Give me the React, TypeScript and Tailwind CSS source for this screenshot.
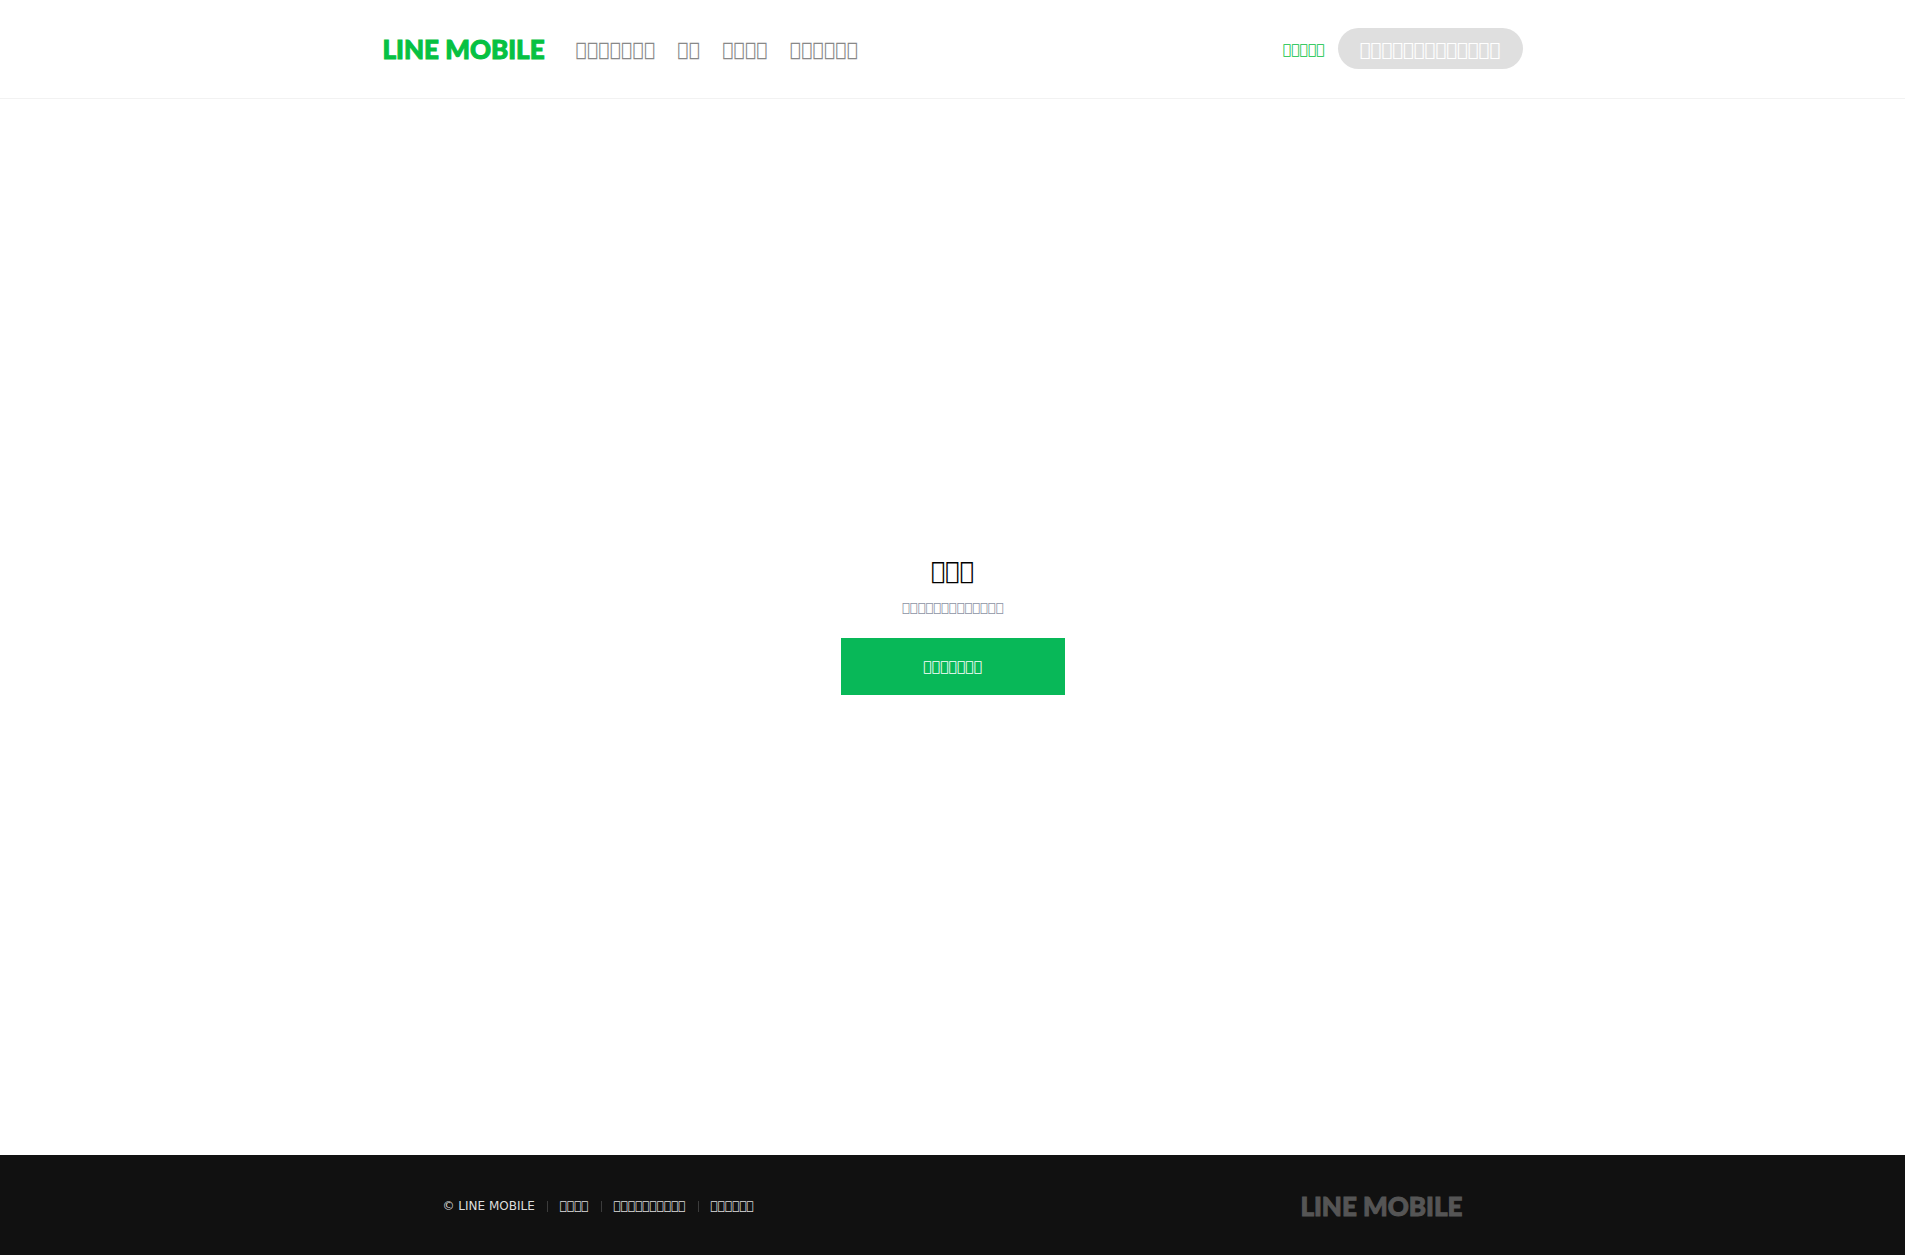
const MISSING = "\u{F0000}";

const boxes = (count: number) => MISSING.repeat(count);

const navItems = [7, 2, 4, 6];
const footerItems = [4, 10, 6];

function Wordmark({ className }: { className: string }) {
  return (
    <span
      className={`block whitespace-nowrap font-['Lato','Liberation_Sans',sans-serif] text-[26px] font-black leading-none [-webkit-text-stroke:1px_currentColor] ${className}`}
    >
      LINE MOBILE
    </span>
  );
}

export default function App() {
  return (
    <div className="flex min-h-screen flex-col bg-white font-['DejaVu_Sans',sans-serif]">
      <header className="border-b border-[#f2f2f2] pt-7 pb-[29px]">
        <div className="mx-auto flex max-w-[1140px] items-center">
          <a href="#home" className="w-[165px]">
            <Wordmark className="text-[#06c142]" />
          </a>
          <nav className="ml-7 flex gap-[22px] text-[19px] leading-7 text-[#888]">
            {navItems.map((count) => (
              <a key={count} href="#section">
                {boxes(count)}
              </a>
            ))}
          </nav>
          <a href="#login" className="ml-auto text-sm leading-5 text-[#06c142]">
            {boxes(5)}
          </a>
          <button
            type="button"
            className="ml-[13px] min-w-[185px] rounded-full bg-[#dfdfdf] px-5 pt-2 pb-[5px] text-lg leading-7 text-white"
          >
            {boxes(13)}
          </button>
        </div>
      </header>

      <main className="flex flex-1 flex-col items-center justify-center">
        <h1 className="text-2xl leading-6 text-black">{boxes(3)}</h1>
        <p className="mt-[15px] text-[13px] leading-5 text-[#8d94a4]">{boxes(13)}</p>
        <button
          type="button"
          className="mt-5 h-[57px] w-56 bg-[#08b858] pb-px text-sm text-white"
        >
          {boxes(7)}
        </button>
      </main>

      <footer className="bg-[#111] pt-[38px] pb-9">
        <div className="mx-auto flex max-w-[1020px] items-center justify-between">
          <div className="flex items-center text-xs leading-6 text-[#ddd]">
            <span>© LINE MOBILE</span>
            {footerItems.map((count) => (
              <span key={count} className="flex items-center">
                <span className="mx-3 h-[11px] w-px bg-[#3c3c3c]" />
                <a href="#info">{boxes(count)}</a>
              </span>
            ))}
          </div>
          <Wordmark className="text-[#555]" />
        </div>
      </footer>
    </div>
  );
}
